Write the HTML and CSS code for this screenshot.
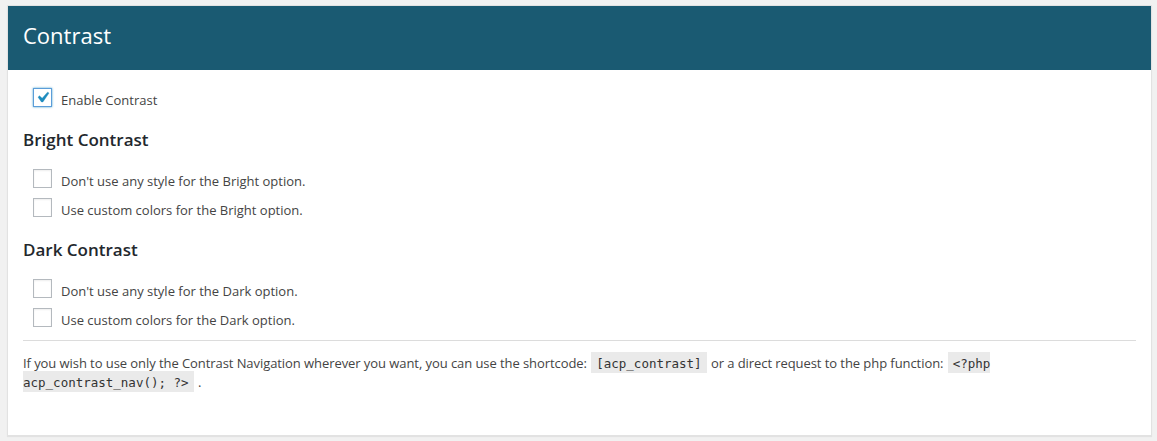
FILE: index.html
```html
<!DOCTYPE html>
<html lang="en">
<head>
<meta charset="utf-8">
<title>Contrast</title>
<link rel="stylesheet" href="styles.css">
</head>
<body>
<div class="card">
  <div class="card-header"><h2 class="title">Contrast</h2></div>
  <div class="card-body">
    <div class="option option-first">
      <span class="box box-checked">
        <svg viewBox="0 0 20 20" width="21" height="21" aria-hidden="true"><path d="M14.83 4.89l1.34.94-5.81 8.38H9.02L5.78 9.67l1.34-1.25 2.57 2.4z" fill="#1e8cbe" stroke="#1e8cbe" stroke-width="0.4" stroke-linejoin="round"/></svg>
      </span>
      <span class="label">Enable Contrast</span>
    </div>

    <h3 class="section-title">Bright Contrast</h3>
    <div class="options">
      <div class="option"><span class="box"></span><span class="label">Don't use any style for the Bright option.</span></div>
      <div class="option"><span class="box"></span><span class="label">Use custom colors for the Bright option.</span></div>
    </div>

    <h3 class="section-title">Dark Contrast</h3>
    <div class="options">
      <div class="option"><span class="box"></span><span class="label">Don't use any style for the Dark option.</span></div>
      <div class="option"><span class="box"></span><span class="label">Use custom colors for the Dark option.</span></div>
    </div>

    <hr class="divider">

    <p class="note">If you wish to use only the Contrast Navigation wherever you want, you can use the shortcode: <code>[acp_contrast]</code> or a direct request to the php function: <code>&lt;?php acp_contrast_nav(); ?&gt;</code> .</p>
  </div>
</div>
</body>
</html>
```

FILE: styles.css
```css
html, body {
  margin: 0;
  padding: 0;
}

body {
  background: #f1f1f1;
  padding: 5px 5px 4px 7px;
  font-family: "Open Sans", "Noto Sans", sans-serif;
  font-size: 13px;
  color: #444;
}

.card {
  background: #fff;
  border: 1px solid #e2e2e2;
  box-shadow: 0 1px 1px rgba(0, 0, 0, 0.06);
}

.card-header {
  background: #1a5a72;
  height: 64px;
  box-sizing: border-box;
  padding: 13px 15px 0;
}

.title {
  margin: 0;
  font-size: 22px;
  line-height: 32px;
  font-weight: 400;
  color: #fff;
}

.card-body {
  padding: 18px 15px 43px;
}

.option {
  display: flex;
  align-items: flex-start;
  padding-left: 10px;
  height: 19px;
}

.options {
  display: flex;
  flex-direction: column;
  gap: 10px;
}

.box {
  width: 19px;
  height: 19px;
  box-sizing: border-box;
  border: 1px solid #b4b9be;
  background: #fff;
  box-shadow: inset 0 1px 2px rgba(0, 0, 0, 0.07);
  flex: none;
  display: flex;
  align-items: center;
  justify-content: center;
  overflow: visible;
}

.box svg {
  display: block;
  flex: none;
  margin: -1px -2px -1px -2px;
}

.box-checked {
  border-color: #5b9dd9;
  box-shadow: 0 0 2px rgba(30, 140, 190, 0.8);
}

.label {
  margin-left: 9px;
  padding-top: 3px;
  line-height: 19px;
  white-space: nowrap;
}

.section-title {
  margin: 21px 0 18px;
  font-size: 17px;
  line-height: 23px;
  font-weight: 600;
  color: #23282d;
}

.divider {
  margin: 13px 0 0;
  border: 0;
  border-top: 1px solid #dcdcdc;
  height: 0;
}

.note {
  margin: 13px 0 0;
  line-height: 19px;
  letter-spacing: -0.07px;
}

code {
  font-family: "DejaVu Sans Mono", "Liberation Mono", monospace;
  font-size: 12.5px;
  letter-spacing: 0;
  background: #eaeaea;
  color: #333;
  padding: 4px 5px 2px;
  margin: 0 1px;
}
```
